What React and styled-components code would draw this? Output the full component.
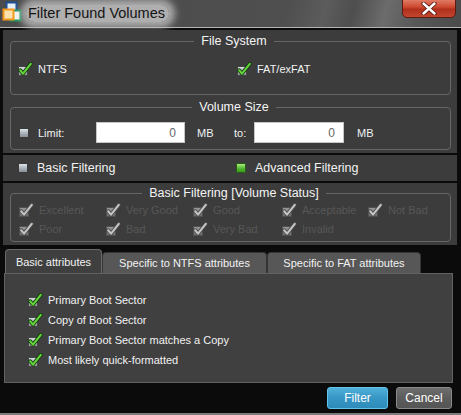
import React from "react";
import styled, { createGlobalStyle } from "styled-components";

const Global = createGlobalStyle`
  html, body { margin: 0; padding: 0; background: #0b0b0b; }
  body { font-family: "Liberation Sans", Arial, sans-serif; }
  * { box-sizing: border-box; }
`;

const Window = styled.div`
  width: 461px;
  height: 415px;
  background: #0b0b0b;
  display: flex;
  flex-direction: column;
  overflow: hidden;
  border-bottom: 2px solid #7c7c7c;
`;

const TitleBar = styled.div`
  height: 28px;
  flex: none;
  display: flex;
  align-items: flex-start;
  background: linear-gradient(105deg, #4b4b4b 0%, #4f4f4f 62%, #5c5c5c 70%, #4e4e4e 76%, #6c6c6c 83%, #585858 90%, #4a4a4a 100%);
  border-bottom: 1px solid #b4b4b4;
`;

const AppIcon = styled.svg`
  margin: 1px 0 0 2px;
  flex: none;
`;

const TitleText = styled.span`
  margin: 5px 0 0 4px;
  padding: 0 4px 0 2px;
  font-size: 14.5px;
  line-height: 17px;
  color: #141414;
  border-radius: 12px;
  background: rgba(200, 200, 200, 0.8);
  box-shadow: 0 0 7px 6px rgba(200, 200, 200, 0.75);
`;

const CloseButton = styled.div`
  margin: -1px 5px 0 auto;
  width: 54px;
  height: 19px;
  border: 1px solid #5e1a10;
  border-radius: 0 0 5px 5px;
  background: linear-gradient(#e07a64 0%, #cf4a32 40%, #b0301c 55%, #c24630 100%);
  display: flex;
  align-items: center;
  justify-content: center;
`;

const Body = styled.div`
  flex: 1;
  display: flex;
  flex-direction: column;
  padding: 2px 0 0 0;
`;

const Panel = styled.div`
  background: #3c3c3c;
  margin: ${(p) => p.$mt || 0}px 4px 0 3px;
  padding: ${(p) => p.$pt || 0}px 0 ${(p) => p.$pb || 0}px 0;
`;

const Group = styled.fieldset`
  margin: ${(p) => p.$mt || 0}px 6px 0 7px;
  border: 1px solid #676767;
  border-radius: 4px;
  padding: ${(p) => p.$pt}px 0 ${(p) => p.$pb}px 7px;
  min-width: 0;
`;

const Legend = styled.legend`
  margin: 0 auto;
  padding: 0 7px;
  color: #f4f4f4;
  font-size: 12.5px;
  line-height: 14px;
`;

const TwoCols = styled.div`
  display: grid;
  grid-template-columns: ${(p) => p.$first}px 1fr;
  align-items: center;
  height: ${(p) => p.$h}px;
`;

const Item = styled.label`
  display: flex;
  align-items: center;
  gap: ${(p) => p.$gap ?? 5}px;
  color: ${(p) => (p.$disabled ? "#575757" : "#f2f2f2")};
  font-size: ${(p) => p.$size || 11}px;
  height: ${(p) => p.$h || 16}px;
  white-space: nowrap;
`;

const SizeRow = styled.div`
  display: flex;
  align-items: center;
  height: 21px;
  padding-left: 1px;
  color: #f2f2f2;
  font-size: 11px;
`;

const Box = styled.span`
  display: inline-block;
  width: 10px;
  height: 10px;
  flex: none;
  border: 1px solid ${(p) => (p.$green ? "#2c5a1c" : "#3a3a3a")};
  background: ${(p) =>
    p.$green
      ? "linear-gradient(#a8ec7c, #4eb42c 60%, #3a9a1e)"
      : "linear-gradient(#dfe4ea, #a4acb4 60%, #8a9098)"};
`;

const Cell = styled.span`
  display: inline-flex;
  align-items: center;
  width: ${(p) => p.$w}px;
  flex: none;
`;

const NumInput = styled.input`
  width: ${(p) => p.$w}px;
  height: 21px;
  flex: none;
  border: 1px solid #c6c6c6;
  background: #ffffff;
  text-align: right;
  padding: 0 8px 0 0;
  font-family: "Liberation Sans", Arial, sans-serif;
  font-size: 12px;
  color: #666;
  outline: none;
`;

const ModeRow = styled.div`
  height: 26px;
  display: grid;
  grid-template-columns: 218px 1fr;
  align-items: center;
  padding-left: 15px;
`;

const StatusGrid = styled.div`
  display: grid;
  grid-template-columns: 87px 87px 89px 86px 1fr;
  grid-auto-rows: 19px;
  align-items: center;
  padding-left: 1px;
`;

const TabStrip = styled.div`
  display: flex;
  align-items: flex-end;
  height: 24px;
  margin: 4px 8px 0 5px;
  flex: none;
`;

const Tab = styled.div`
  width: ${(p) => p.$w}px;
  height: ${(p) => (p.$active ? 24 : 21)}px;
  background: ${(p) => (p.$active ? "#3f3f3f" : "#575757")};
  border: 1px solid ${(p) => (p.$active ? "#6a6a6a" : "#353535")};
  border-bottom: none;
  border-radius: 4px 4px 0 0;
  color: #f2f2f2;
  font-size: 11px;
  display: flex;
  align-items: center;
  justify-content: center;
  white-space: nowrap;
`;

const TabBody = styled.div`
  height: 110px;
  margin: 0 8px 0 4px;
  background: #404040;
  border: 1px solid #626262;
  padding: 16px 0 0 23px;
  display: flex;
  flex-direction: column;
`;

const ButtonRow = styled.div`
  flex: 1;
  display: flex;
  justify-content: flex-end;
  align-items: flex-start;
  gap: 8px;
  padding: 4px 9px 0 0;
`;

const Button = styled.button`
  width: ${(p) => p.$w}px;
  height: 22px;
  border-radius: 3px;
  font-family: "Liberation Sans", Arial, sans-serif;
  font-size: 12px;
  color: #ffffff;
  border: 1px solid ${(p) => (p.$primary ? "#63c4ea" : "#8a8a8a")};
  background: ${(p) =>
    p.$primary
      ? "linear-gradient(#4fb0d8, #3796c4 50%, #2f8cba)"
      : "linear-gradient(#6e6e6e, #5c5c5c 50%, #555555)"};
  padding: 0;
`;

const Check = ({ disabled }) => (
  <svg width="15" height="14" viewBox="0 0 15 14" style={{ flex: "none" }}>
    <defs>
      <linearGradient id={disabled ? "bxd" : "bx"} x1="0" y1="0" x2="0" y2="1">
        <stop offset="0" stopColor={disabled ? "#9a9a9a" : "#d8dde2"} />
        <stop offset="1" stopColor={disabled ? "#6a6a6a" : "#8a9096"} />
      </linearGradient>
    </defs>
    <rect x="0.5" y="4.5" width="9" height="9" fill={`url(#${disabled ? "bxd" : "bx"})`} stroke={disabled ? "#505050" : "#444"} />
    <path d="M2.2 8.3 L5 11.6 L12.8 1.8" fill="none" stroke={disabled ? "#4a4a4a" : "#163a0c"} strokeWidth="3.8" strokeLinecap="round" strokeLinejoin="round" />
    <path d="M2.2 8.3 L5 11.6 L12.8 1.8" fill="none" stroke={disabled ? "#c4c4c4" : "#62d43c"} strokeWidth="2.1" strokeLinecap="round" strokeLinejoin="round" />
  </svg>
);

const statuses = ["Excellent", "Very Good", "Good", "Acceptable", "Not Bad", "Poor", "Bad", "Very Bad", "Invalid"];
const attributes = [
  "Primary Boot Sector",
  "Copy of Boot Sector",
  "Primary Boot Sector matches a Copy",
  "Most likely quick-formatted",
];

export default function App() {
  return (
    <>
      <Global />
      <Window>
        <TitleBar>
          <AppIcon width="20" height="22" viewBox="0 0 20 22">
            <rect x="4.5" y="1.5" width="10" height="11" fill="#e8eef6" stroke="#1d4f96" strokeWidth="2" />
            <rect x="8.5" y="9.5" width="10" height="10" fill="#f4f8f4" stroke="#14915a" strokeWidth="2" />
            <rect x="1.5" y="8.5" width="10" height="10" fill="#fde2b0" stroke="#f39a1e" strokeWidth="2" />
          </AppIcon>
          <TitleText>Filter Found Volumes</TitleText>
          <CloseButton>
            <svg width="16" height="13" viewBox="0 0 16 13">
              <path d="M2.5 1.5 L13.5 11.5 M13.5 1.5 L2.5 11.5" stroke="#5a1a10" strokeWidth="4.2" strokeLinecap="round" />
              <path d="M2.5 1.5 L13.5 11.5 M13.5 1.5 L2.5 11.5" stroke="#ffffff" strokeWidth="2.4" strokeLinecap="round" />
            </svg>
          </CloseButton>
        </TitleBar>

        <Body>
          <Panel $pt={4} $pb={3}>
            <Group $pt={13} $pb={17}>
              <Legend>File System</Legend>
              <TwoCols $first={219} $h={16}>
                <Item><Check />NTFS</Item>
                <Item><Check />FAT/exFAT</Item>
              </TwoCols>
            </Group>
            <Group $mt={5} $pt={8} $pb={6}>
              <Legend>Volume Size</Legend>
              <SizeRow>
                <Cell $w={19}><Box /></Cell>
                <Cell $w={58}>Limit:</Cell>
                <NumInput $w={89} defaultValue="0" />
                <Cell $w={12} />
                <Cell $w={37}>MB</Cell>
                <Cell $w={20}>to:</Cell>
                <NumInput $w={90} defaultValue="0" />
                <Cell $w={13} />
                <span>MB</span>
              </SizeRow>
            </Group>
          </Panel>

          <Panel $mt={2}>
            <ModeRow>
              <Item $size={12.5} $gap={9} $h={26}><Box />Basic Filtering</Item>
              <Item $size={12.5} $gap={9} $h={26}><Box $green />Advanced Filtering</Item>
            </ModeRow>
          </Panel>

          <Panel $mt={2} $pt={3} $pb={3}>
            <Group $pt={0} $pb={3}>
              <Legend>Basic Filtering [Volume Status]</Legend>
              <StatusGrid>
                {statuses.map((s) => (
                  <Item key={s} $disabled $h={19}><Check disabled />{s}</Item>
                ))}
              </StatusGrid>
            </Group>
          </Panel>

          <TabStrip>
            <Tab $active $w={97}>Basic attributes</Tab>
            <Tab $w={165}>Specific to NTFS attributes</Tab>
            <Tab $w={154}>Specific to FAT attributes</Tab>
          </TabStrip>
          <TabBody>
            {attributes.map((a) => (
              <Item key={a} $h={20}><Check />{a}</Item>
            ))}
          </TabBody>

          <ButtonRow>
            <Button $primary $w={61}>Filter</Button>
            <Button $w={56}>Cancel</Button>
          </ButtonRow>
        </Body>
      </Window>
    </>
  );
}
